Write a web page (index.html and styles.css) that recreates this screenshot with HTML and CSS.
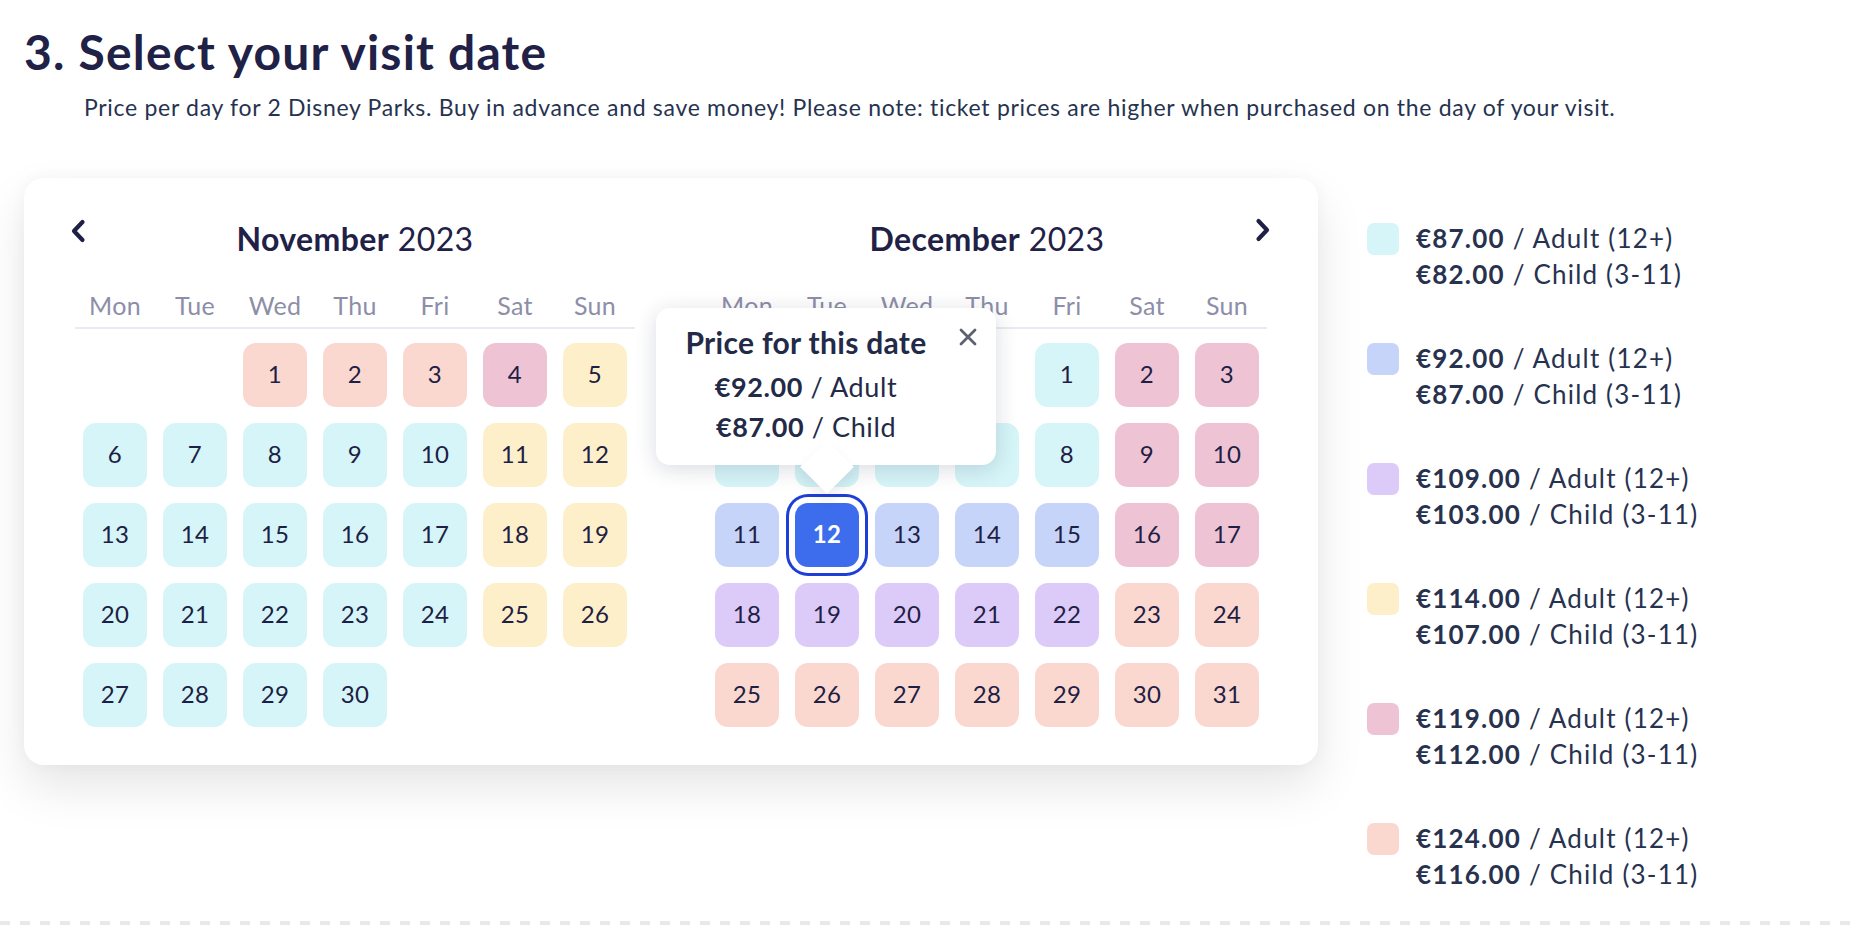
FILE: index.html
```html
<!DOCTYPE html>
<html lang="en">
<head>
<meta charset="utf-8">
<title>Select your visit date</title>
<link rel="stylesheet" href="styles.css">
</head>
<body>
<main class="page">
  <section class="section">
    <h1 class="title">3. Select your visit date</h1>
    <p class="subtitle">Price per day for 2 Disney Parks. Buy in advance and save money! Please note: ticket prices are higher when purchased on the day of your visit.</p>

    <div class="content">
      <div class="card">
        <button class="nav nav-prev" aria-label="Previous month">
          <svg viewBox="0 0 16 24" width="16" height="24"><polyline points="12.5,3 4,12 12.5,21" fill="none" stroke="#1e2046" stroke-width="4.2" stroke-linecap="round" stroke-linejoin="round"/></svg>
        </button>
        <button class="nav nav-next" aria-label="Next month">
          <svg viewBox="0 0 16 24" width="16" height="24"><polyline points="3.5,3 12,12 3.5,21" fill="none" stroke="#1e2046" stroke-width="4.2" stroke-linecap="round" stroke-linejoin="round"/></svg>
        </button>

        <div class="months">
          <div class="month">
            <h2 class="month-title"><strong>November</strong> 2023</h2>
            <div class="weekdays">
              <span>Mon</span><span>Tue</span><span>Wed</span><span>Thu</span><span>Fri</span><span>Sat</span><span>Sun</span>
            </div>
            <div class="days">
              <span class="day empty"></span><span class="day empty"></span>
              <span class="day peach">1</span><span class="day peach">2</span><span class="day peach">3</span><span class="day pink">4</span><span class="day yellow">5</span>
              <span class="day cyan">6</span><span class="day cyan">7</span><span class="day cyan">8</span><span class="day cyan">9</span><span class="day cyan">10</span><span class="day yellow">11</span><span class="day yellow">12</span>
              <span class="day cyan">13</span><span class="day cyan">14</span><span class="day cyan">15</span><span class="day cyan">16</span><span class="day cyan">17</span><span class="day yellow">18</span><span class="day yellow">19</span>
              <span class="day cyan">20</span><span class="day cyan">21</span><span class="day cyan">22</span><span class="day cyan">23</span><span class="day cyan">24</span><span class="day yellow">25</span><span class="day yellow">26</span>
              <span class="day cyan">27</span><span class="day cyan">28</span><span class="day cyan">29</span><span class="day cyan">30</span>
            </div>
          </div>

          <div class="month">
            <h2 class="month-title"><strong>December</strong> 2023</h2>
            <div class="weekdays">
              <span>Mon</span><span>Tue</span><span>Wed</span><span>Thu</span><span>Fri</span><span>Sat</span><span>Sun</span>
            </div>
            <div class="days">
              <span class="day empty"></span><span class="day empty"></span><span class="day empty"></span><span class="day empty"></span>
              <span class="day cyan">1</span><span class="day pink">2</span><span class="day pink">3</span>
              <span class="day cyan">4</span><span class="day cyan">5</span><span class="day cyan">6</span><span class="day cyan">7</span><span class="day cyan">8</span><span class="day pink">9</span><span class="day pink">10</span>
              <span class="day blue">11</span><span class="day selected">12</span><span class="day blue">13</span><span class="day blue">14</span><span class="day blue">15</span><span class="day pink">16</span><span class="day pink">17</span>
              <span class="day purple">18</span><span class="day purple">19</span><span class="day purple">20</span><span class="day purple">21</span><span class="day purple">22</span><span class="day peach">23</span><span class="day peach">24</span>
              <span class="day peach">25</span><span class="day peach">26</span><span class="day peach">27</span><span class="day peach">28</span><span class="day peach">29</span><span class="day peach">30</span><span class="day peach">31</span>
            </div>
          </div>
        </div>

        <div class="tooltip">
          <button class="tooltip-close" aria-label="Close">
            <svg viewBox="0 0 18 18" width="18" height="18"><path d="M2 2 L16 16 M16 2 L2 16" stroke="#5c6170" stroke-width="2.8" stroke-linecap="round"/></svg>
          </button>
          <p class="tooltip-title">Price for this date</p>
          <p class="tooltip-line"><b>€92.00</b> / Adult</p>
          <p class="tooltip-line"><b>€87.00</b> / Child</p>
          <span class="tooltip-arrow"></span>
        </div>
      </div>

      <ul class="legend">
        <li class="legend-item"><span class="swatch cyan"></span><span class="legend-text"><span class="line"><b>€87.00</b> / Adult (12+)</span><span class="line"><b>€82.00</b> / Child (3-11)</span></span></li>
        <li class="legend-item"><span class="swatch blue"></span><span class="legend-text"><span class="line"><b>€92.00</b> / Adult (12+)</span><span class="line"><b>€87.00</b> / Child (3-11)</span></span></li>
        <li class="legend-item"><span class="swatch purple"></span><span class="legend-text"><span class="line"><b>€109.00</b> / Adult (12+)</span><span class="line"><b>€103.00</b> / Child (3-11)</span></span></li>
        <li class="legend-item"><span class="swatch yellow"></span><span class="legend-text"><span class="line"><b>€114.00</b> / Adult (12+)</span><span class="line"><b>€107.00</b> / Child (3-11)</span></span></li>
        <li class="legend-item"><span class="swatch pink"></span><span class="legend-text"><span class="line"><b>€119.00</b> / Adult (12+)</span><span class="line"><b>€112.00</b> / Child (3-11)</span></span></li>
        <li class="legend-item"><span class="swatch peach"></span><span class="legend-text"><span class="line"><b>€124.00</b> / Adult (12+)</span><span class="line"><b>€116.00</b> / Child (3-11)</span></span></li>
      </ul>
    </div>
  </section>
  <div class="divider"></div>
</main>
</body>
</html>
```

FILE: styles.css
```css
* { box-sizing: border-box; }

html, body {
  margin: 0;
  padding: 0;
  background: #ffffff;
}

body {
  font-family: Lato, "Open Sans", "Liberation Sans", sans-serif;
  color: #1f2147;
  overflow: hidden;
}

.page {
  width: 1856px;
  height: 952px;
  padding-top: 24px;
}

.section {
  padding-left: 24px;
}

.title {
  margin: 0;
  font-size: 48px;
  line-height: 56px;
  font-weight: 700;
  color: #1f2147;
  letter-spacing: 1.2px;
}

.subtitle {
  margin: 12px 0 0 60px;
  font-size: 23px;
  line-height: 30px;
  color: #263350;
  letter-spacing: 0.7px;
}

.content {
  display: flex;
  align-items: flex-start;
  margin-top: 56px;
}

/* Calendar card */
.card {
  position: relative;
  width: 1294px;
  height: 587px;
  padding: 41px 51px 38px;
  background: #ffffff;
  border-radius: 20px;
  box-shadow: 0 22px 48px rgba(0, 0, 0, 0.1), 0 0 16px rgba(0, 0, 0, 0.035);
}

.nav {
  position: absolute;
  top: 41px;
  width: 16px;
  height: 24px;
  padding: 0;
  border: 0;
  background: none;
  display: block;
}
.nav svg { display: block; }
.nav-prev { left: 46px; }
.nav-next { right: 47px; top: 40px; }

.months {
  display: flex;
  gap: 72px;
}

.month {
  width: 560px;
}

.month-title {
  margin: 0;
  text-align: center;
  font-size: 32px;
  line-height: 40px;
  font-weight: 400;
  color: #1f2147;
  letter-spacing: 0.4px;
}
.month-title strong { font-weight: 700; }

.weekdays {
  display: grid;
  grid-template-columns: repeat(7, 80px);
  margin-top: 30px;
  padding-bottom: 6px;
  border-bottom: 2px solid #e8ebf1;
}
.weekdays span {
  text-align: center;
  font-size: 25px;
  line-height: 32px;
  color: #8d8ea7;
  letter-spacing: 0.3px;
}

.days {
  display: grid;
  grid-template-columns: repeat(7, 80px);
  grid-auto-rows: 64px;
  row-gap: 16px;
  margin-top: 14px;
}

.day {
  justify-self: center;
  width: 64px;
  height: 64px;
  padding-bottom: 3px;
  border-radius: 13px;
  display: flex;
  align-items: center;
  justify-content: center;
  font-size: 24px;
  color: #1e2043;
  letter-spacing: 0.4px;
}
.day.empty { background: transparent; }

.cyan { background: #d5f5f8; }
.peach { background: #fad8d0; }
.pink { background: #eec4d5; }
.yellow { background: #fdefc9; }
.blue { background: #c6d4f9; }
.purple { background: #dccaf9; }

.day.selected {
  background: #3d6cec;
  color: #ffffff;
  font-weight: 700;
  box-shadow: 0 0 0 6px #ffffff, 0 0 0 9px #1d3fd5;
}

/* Tooltip */
.tooltip {
  position: absolute;
  left: 632px;
  top: 130px;
  width: 340px;
  height: 157px;
  padding: 17px 40px 17px 0;
  background: #ffffff;
  border-radius: 14px;
  box-shadow: 0 4px 22px rgba(20, 30, 60, 0.16);
  text-align: center;
  z-index: 2;
}

.tooltip-title {
  position: relative;
  z-index: 2;
  margin: 0 0 8px;
  font-size: 30px;
  line-height: 34px;
  font-weight: 700;
  color: #232a48;
  letter-spacing: 0.3px;
  white-space: nowrap;
}

.tooltip-line {
  position: relative;
  z-index: 2;
  margin: 0;
  font-size: 27px;
  line-height: 40px;
  color: #232a48;
  letter-spacing: 0.6px;
  white-space: nowrap;
}
.tooltip-line b { font-weight: 700; }

.tooltip-close {
  position: absolute;
  top: 20px;
  right: 19px;
  width: 18px;
  height: 18px;
  padding: 0;
  border: 0;
  background: none;
  z-index: 3;
}
.tooltip-close svg { display: block; }

.tooltip-arrow {
  position: absolute;
  left: 152px;
  top: 140px;
  width: 38px;
  height: 38px;
  background: #ffffff;
  transform: rotate(45deg);
  box-shadow: 6px 6px 14px rgba(20, 30, 60, 0.08);
  z-index: 1;
}

/* Legend */
.legend {
  list-style: none;
  margin: 0 0 0 49px;
  padding: 42px 0 0;
  display: flex;
  flex-direction: column;
  gap: 48px;
}

.legend-item {
  display: flex;
  align-items: flex-start;
}

.swatch {
  flex: none;
  width: 32px;
  height: 32px;
  margin-top: 3px;
  margin-right: 17px;
  border-radius: 7px;
}

.legend-text {
  display: flex;
  flex-direction: column;
}

.legend-text .line {
  font-size: 26px;
  line-height: 36px;
  color: #27324f;
  letter-spacing: 1.2px;
  white-space: nowrap;
}
.legend-text b { font-weight: 700; }

.divider {
  margin-top: 29px;
  height: 4px;
  width: 100%;
  background-image: repeating-linear-gradient(90deg, #e9e9e9 0 10px, transparent 10px 20px);
}
```
